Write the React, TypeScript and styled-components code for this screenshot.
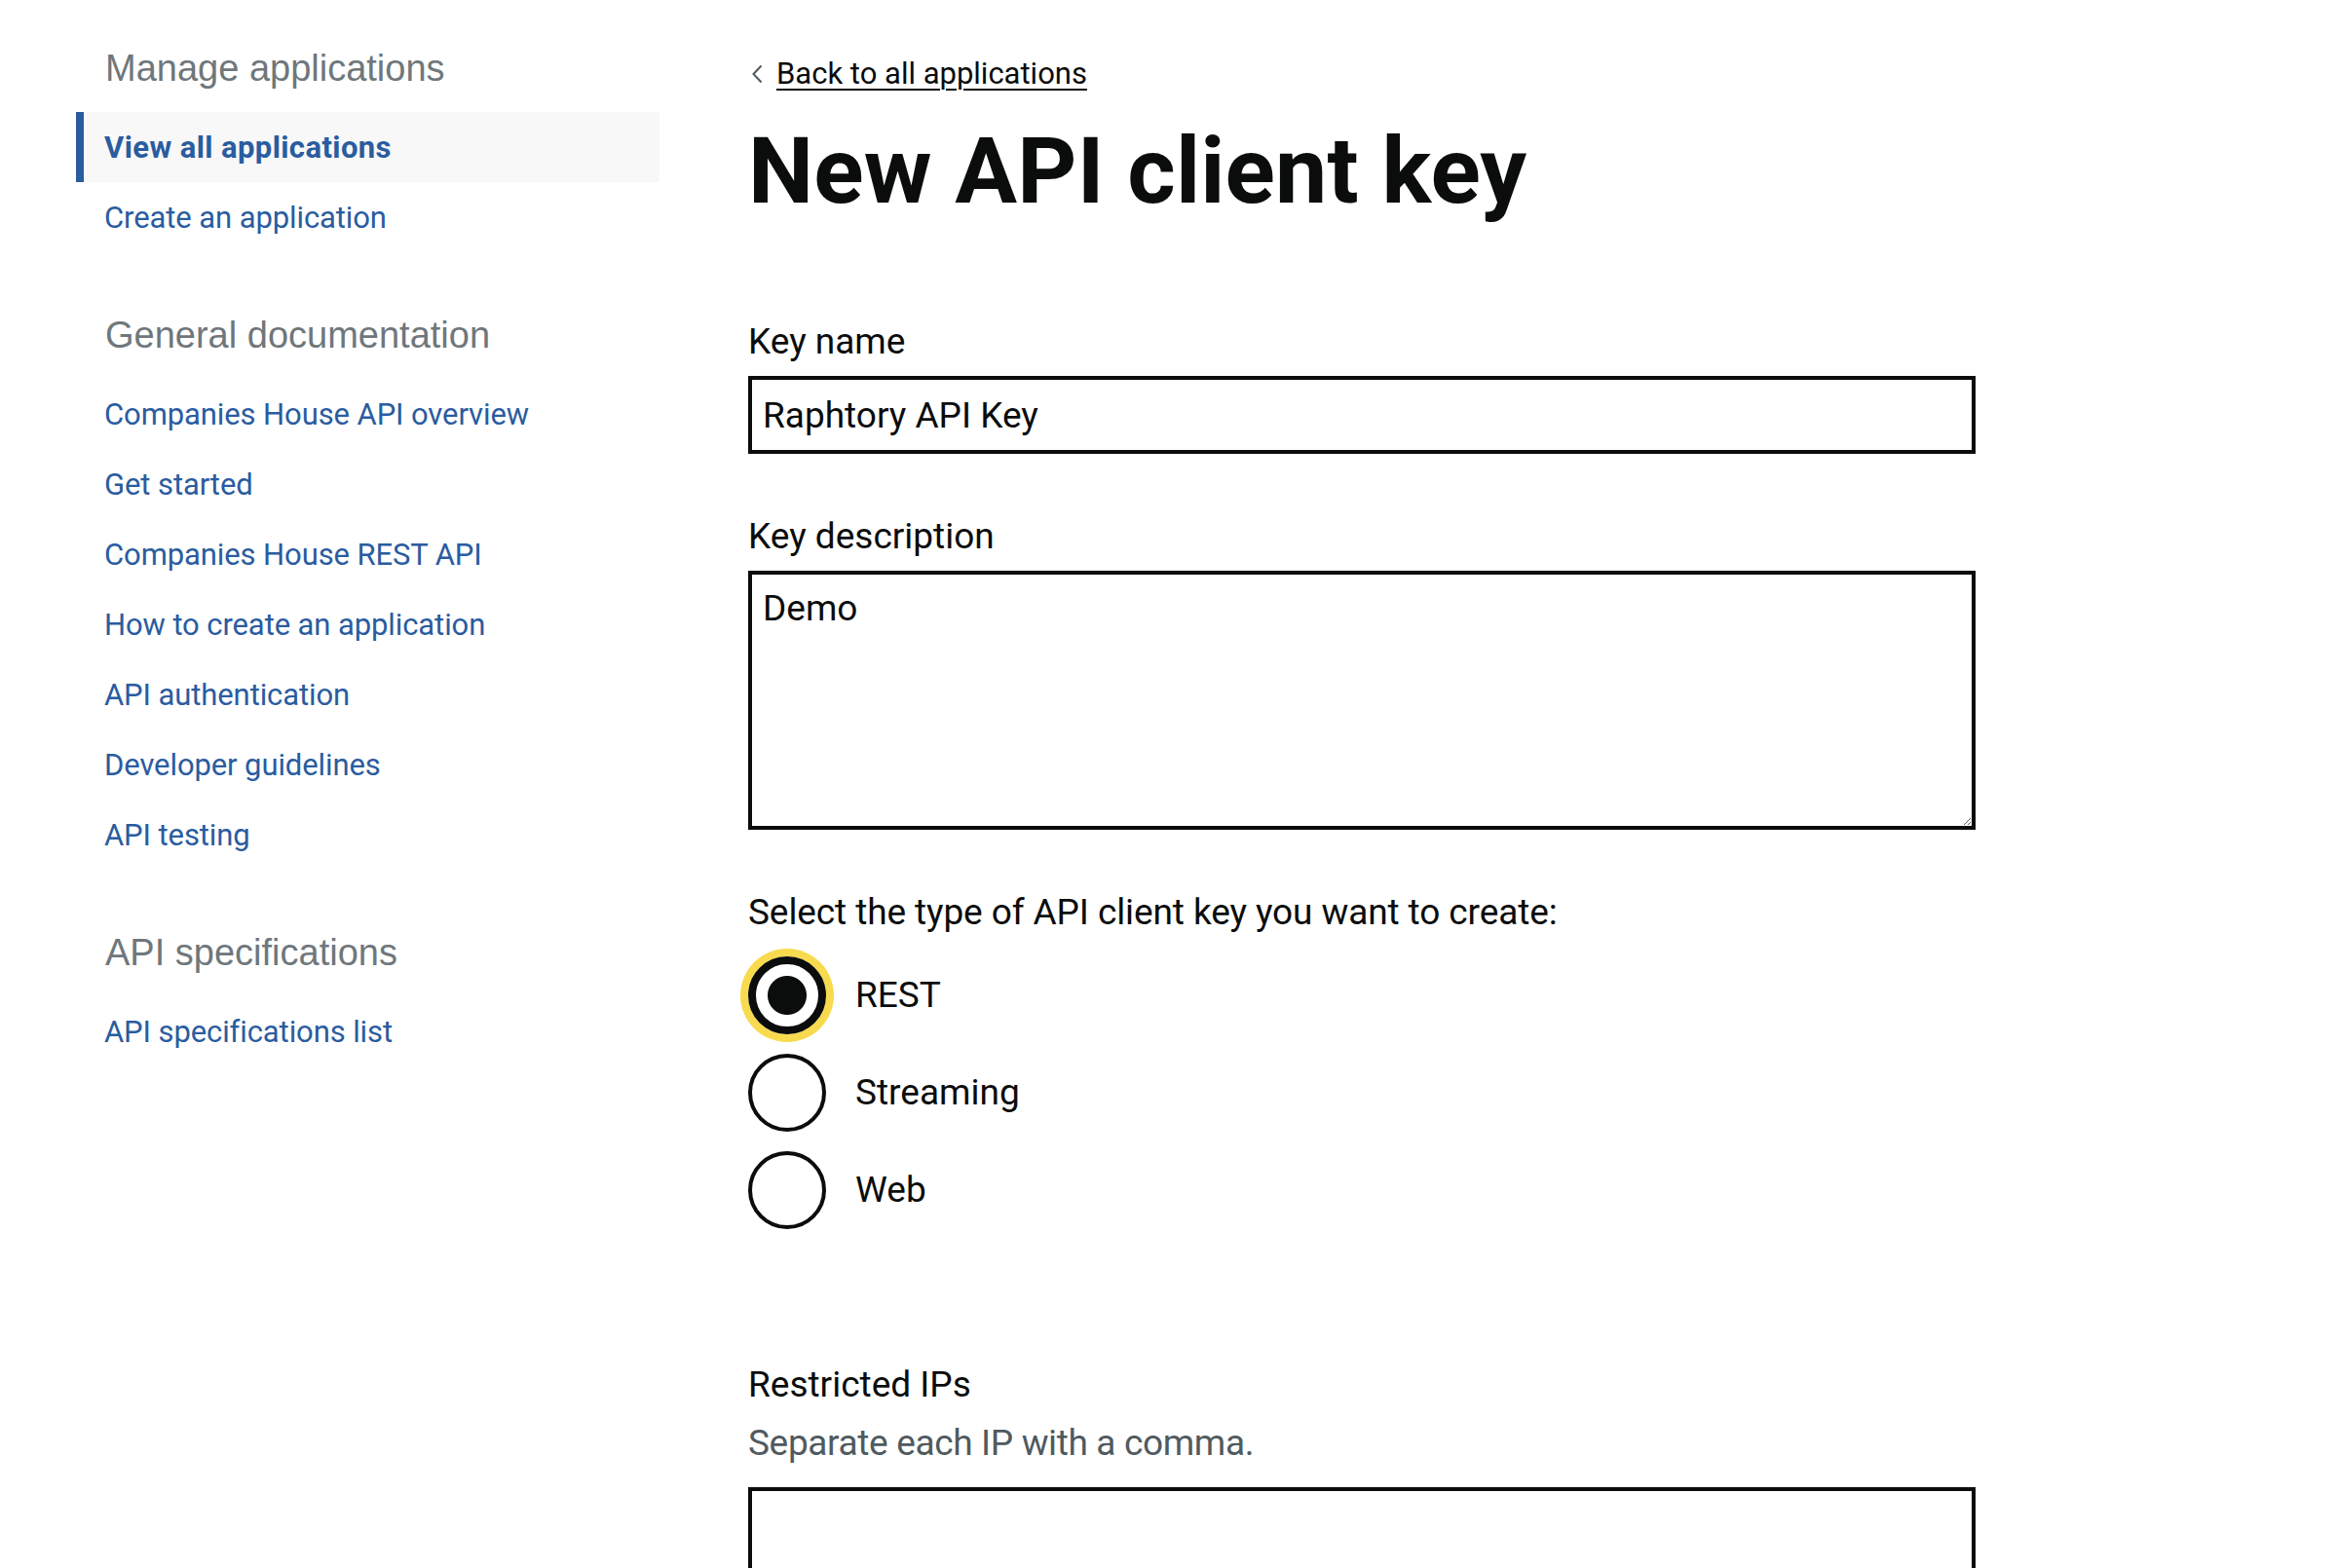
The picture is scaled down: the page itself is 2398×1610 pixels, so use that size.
import React from 'react';
import styled, { createGlobalStyle } from 'styled-components';

const GlobalStyle = createGlobalStyle`
  html, body { margin: 0; padding: 0; background: #ffffff; }
  body {
    font-family: Roboto, "Liberation Sans", Arial, sans-serif;
    color: #0b0c0c;
  }
  * { box-sizing: border-box; }
`;

const BLUE = '#2a5c9f';
const TEXT = '#0b0c0c';

const Page = styled.div`
  display: flex;
  gap: 91px;
  padding-left: 78px;
  height: 1610px;
  overflow: hidden;
`;

const Sidebar = styled.nav`
  width: 599px;
  flex-shrink: 0;
  padding-top: 45px;
  display: flex;
  flex-direction: column;
`;

const NavHeading = styled.h2<{ $first?: boolean }>`
  margin: ${(p) => (p.$first ? '0' : '60px')} 0 20px 30px;
  font-family: "Liberation Sans", Arial, sans-serif;
  font-weight: 400;
  font-size: 38px;
  line-height: 50px;
  color: #6f777b;
`;

const NavList = styled.ul`
  margin: 0;
  padding: 0;
  list-style: none;
`;

const NavLink = styled.a<{ $active?: boolean }>`
  display: flex;
  align-items: center;
  height: 72px;
  padding-left: 21px;
  border-left: 8px solid ${(p) => (p.$active ? BLUE : 'transparent')};
  background: ${(p) => (p.$active ? '#f8f8f8' : 'transparent')};
  color: ${BLUE};
  font-size: 31px;
  font-weight: ${(p) => (p.$active ? 700 : 400)};
  letter-spacing: ${(p) => (p.$active ? '0.4px' : '-0.1px')};
  text-decoration: none;
`;

const Main = styled.main`
  width: 1260px;
  flex-shrink: 0;
  padding-top: 26px;
`;

const BackLink = styled.a`
  display: inline-flex;
  align-items: center;
  gap: 14px;
  margin: 30px 0;
  height: 40px;
  font-size: 31px;
  line-height: 40px;
  color: ${TEXT};
  text-decoration: underline;
  text-decoration-thickness: 2px;
  text-underline-offset: 5px;
`;

const Chevron = styled.svg`
  margin-left: 3px;
  flex-shrink: 0;
`;

const Title = styled.h1`
  margin: 0 0 100px;
  font-size: 95px;
  line-height: 100px;
  font-weight: 700;
  letter-spacing: 0.15px;
  color: ${TEXT};
`;

const FormGroup = styled.div`
  margin-bottom: 60px;
`;

const Label = styled.label`
  display: block;
  margin-bottom: 10px;
  font-size: 37px;
  line-height: 50px;
  color: ${TEXT};
`;

const Hint = styled.div`
  margin-bottom: 20px;
  font-size: 37px;
  line-height: 50px;
  letter-spacing: -0.35px;
  color: #505a5f;
`;

const TextInput = styled.input`
  display: block;
  width: 100%;
  height: 80px;
  margin: 0;
  padding: 0 11px;
  border: 4px solid ${TEXT};
  border-radius: 0;
  font-family: inherit;
  font-size: 37px;
  color: ${TEXT};
  background: #fff;
  outline: none;
`;

const TextArea = styled.textarea`
  display: block;
  width: 100%;
  height: 266px;
  margin: 0;
  padding: 10px 11px;
  border: 4px solid ${TEXT};
  border-radius: 0;
  font-family: inherit;
  font-size: 37px;
  line-height: 50px;
  color: ${TEXT};
  background: #fff;
  resize: vertical;
  outline: none;
`;

const Fieldset = styled.fieldset`
  margin: 0 0 135px;
  padding: 0;
  border: 0;
  min-width: 0;
`;

const Legend = styled.legend`
  padding: 0;
  margin-bottom: 20px;
  font-size: 37px;
  line-height: 50px;
  letter-spacing: -0.1px;
  color: ${TEXT};
`;

const RadioItem = styled.label`
  display: flex;
  align-items: center;
  gap: 30px;
  height: 80px;
  margin-bottom: 20px;
  &:last-child { margin-bottom: 0; }
`;

const RadioInput = styled.input<{ $focused?: boolean }>`
  appearance: none;
  -webkit-appearance: none;
  flex-shrink: 0;
  width: 80px;
  height: 80px;
  margin: 0;
  border: ${(p) => (p.$focused ? 8 : 4)}px solid ${TEXT};
  border-radius: 50%;
  background: #fff;
  box-shadow: ${(p) => (p.$focused ? '0 0 0 8px #f8da4e' : 'none')};
  outline: none;
  &:checked {
    background: radial-gradient(circle, ${TEXT} 0 19.5px, #fff 20.5px);
  }
`;

const RadioText = styled.span`
  font-size: 37px;
  line-height: 50px;
  color: ${TEXT};
`;

const manageLinks = [
  { label: 'View all applications', active: true },
  { label: 'Create an application' },
];

const docLinks = [
  'Companies House API overview',
  'Get started',
  'Companies House REST API',
  'How to create an application',
  'API authentication',
  'Developer guidelines',
  'API testing',
];

const radios = [
  { value: 'rest', label: 'REST', checked: true, focused: true },
  { value: 'streaming', label: 'Streaming' },
  { value: 'web', label: 'Web' },
];

export default function App() {
  return (
    <>
      <GlobalStyle />
      <Page>
        <Sidebar>
          <NavHeading $first>Manage applications</NavHeading>
          <NavList>
            {manageLinks.map((l) => (
              <li key={l.label}>
                <NavLink href="#" $active={l.active}>{l.label}</NavLink>
              </li>
            ))}
          </NavList>
          <NavHeading>General documentation</NavHeading>
          <NavList>
            {docLinks.map((l) => (
              <li key={l}>
                <NavLink href="#">{l}</NavLink>
              </li>
            ))}
          </NavList>
          <NavHeading>API specifications</NavHeading>
          <NavList>
            <li>
              <NavLink href="#">API specifications list</NavLink>
            </li>
          </NavList>
        </Sidebar>
        <Main>
          <BackLink href="#">
            <Chevron width="12" height="20" viewBox="0 0 12 20">
              <path d="M10.5 1.5 L2.5 10 L10.5 18.5" fill="none" stroke="#505a5f" strokeWidth="2" />
            </Chevron>
            Back to all applications
          </BackLink>
          <Title>New API client key</Title>
          <FormGroup>
            <Label htmlFor="key-name">Key name</Label>
            <TextInput id="key-name" type="text" defaultValue="Raphtory API Key" />
          </FormGroup>
          <FormGroup>
            <Label htmlFor="key-desc">Key description</Label>
            <TextArea id="key-desc" defaultValue="Demo" />
          </FormGroup>
          <Fieldset>
            <Legend>Select the type of API client key you want to create:</Legend>
            {radios.map((r) => (
              <RadioItem key={r.value}>
                <RadioInput
                  type="radio"
                  name="key-type"
                  value={r.value}
                  defaultChecked={r.checked}
                  $focused={r.focused}
                />
                <RadioText>{r.label}</RadioText>
              </RadioItem>
            ))}
          </Fieldset>
          <FormGroup>
            <Label htmlFor="ips">Restricted IPs</Label>
            <Hint>Separate each IP with a comma.</Hint>
            <TextArea id="ips" />
          </FormGroup>
        </Main>
      </Page>
    </>
  );
}
